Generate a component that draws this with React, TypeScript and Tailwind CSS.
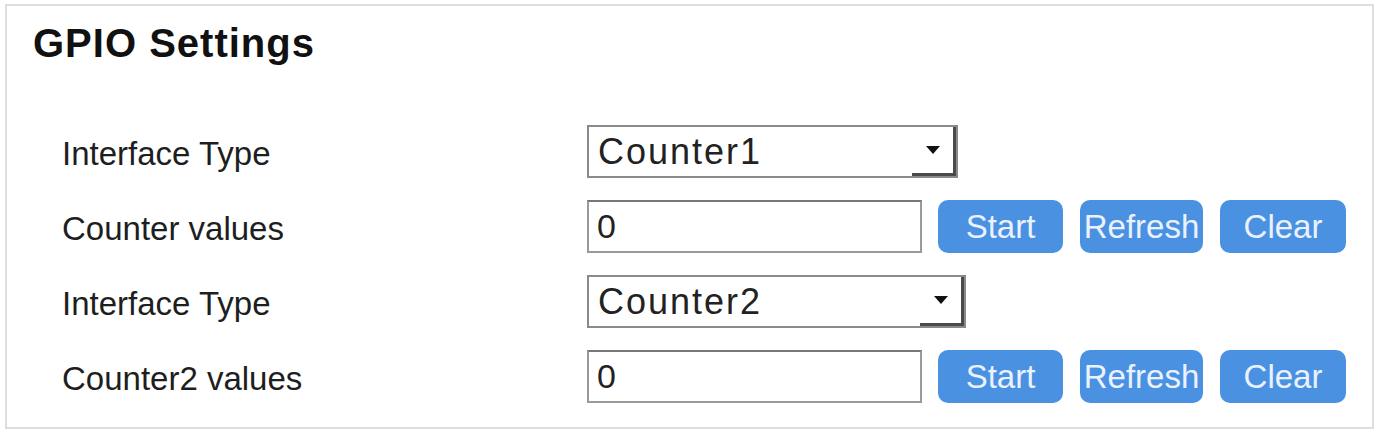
import React from "react";

const font = { fontFamily: '"Liberation Sans", Arial, sans-serif' };

function Select({ value, wide }: { value: string; wide?: boolean }) {
  return (
    <div
      className={`flex h-[53px] items-stretch border-2 border-[#8a8a8a] bg-white ${wide ? "w-[379px]" : "w-[371px]"}`}
    >
      <div className="flex flex-1 items-center pl-[9px] text-[36px] tracking-[2px] text-[#222]">
        {value}
      </div>
      <div className="flex w-[44px] items-center justify-center border-b-[3px] border-r-[3px] border-[#4a4a4a] bg-white">
        <svg width="14" height="8" viewBox="0 0 14 8">
          <polygon points="0,0 14,0 7,8" fill="#111" />
        </svg>
      </div>
    </div>
  );
}

function Input() {
  return (
    <div className="flex h-[53px] w-[335px] items-center border-2 border-[#9a9a9a] border-t-[#777] bg-white pl-[8px] text-[34px] text-[#222]">
      0
    </div>
  );
}

function Btn({ label, w }: { label: string; w: string }) {
  return (
    <div
      className={`flex h-[53px] items-center justify-center rounded-[10px] bg-[#4b91e2] text-[33px] text-[#eaf2ff] ${w}`}
    >
      {label}
    </div>
  );
}

function Buttons() {
  return (
    <div className="ml-[16px] flex gap-[17px]">
      <Btn label="Start" w="w-[125px]" />
      <Btn label="Refresh" w="w-[123px]" />
      <Btn label="Clear" w="w-[126px]" />
    </div>
  );
}

function Row({ label, children }: { label: string; children: React.ReactNode }) {
  return (
    <div className="flex h-[53px] items-center">
      <div className="w-[525px] pt-[4px] text-[33px] text-[#1e1e1e]">{label}</div>
      {children}
    </div>
  );
}

export default function App() {
  return (
    <div className="h-[438px] w-[1381px] bg-white pl-[5px] pt-[4px]" style={font}>
      <div className="h-[425px] w-[1369px] border-2 border-[#dedede]">
        <div className="pl-[26px] pt-[14px] text-[40px] font-bold leading-[46px] tracking-[1px] text-[#111]">
          GPIO Settings
        </div>
        <div className="mt-[59px] flex flex-col gap-[22px] pl-[55px]">
          <Row label="Interface Type">
            <Select value="Counter1" />
          </Row>
          <Row label="Counter values">
            <Input />
            <Buttons />
          </Row>
          <Row label="Interface Type">
            <Select value="Counter2" wide />
          </Row>
          <Row label="Counter2 values">
            <Input />
            <Buttons />
          </Row>
        </div>
      </div>
    </div>
  );
}
